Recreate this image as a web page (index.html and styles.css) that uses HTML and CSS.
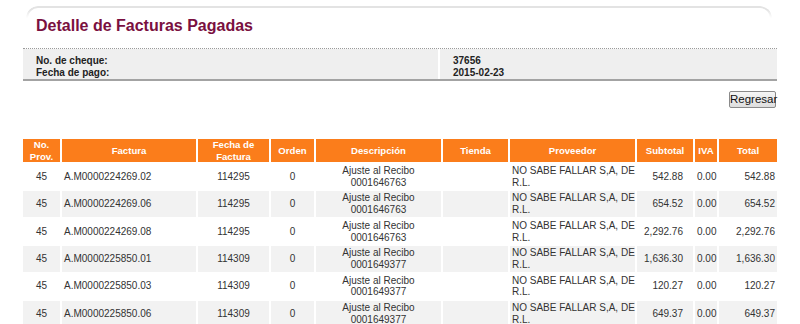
FILE: index.html
```html
<!DOCTYPE html>
<html lang="es">
<head>
<meta charset="utf-8">
<title>Detalle de Facturas Pagadas</title>
<link rel="stylesheet" href="styles.css">
</head>
<body>
<div class="frame"></div>
<h1 class="title">Detalle de Facturas Pagadas</h1>
<div class="info">
  <div class="info-cell labels">No. de cheque:<br>Fecha de pago:</div>
  <div class="info-cell values">37656<br>2015-02-23</div>
</div>
<div class="actions"><button class="btn" type="button">Regresar</button></div>
<table class="grid">
  <thead>
    <tr>
      <th class="c-prov">No.<br>Prov.</th>
      <th class="c-fact">Factura</th>
      <th class="c-fecha">Fecha de<br>Factura</th>
      <th class="c-orden">Orden</th>
      <th class="c-desc">Descripción</th>
      <th class="c-tienda">Tienda</th>
      <th class="c-proveedor">Proveedor</th>
      <th class="c-sub">Subtotal</th>
      <th class="c-iva">IVA</th>
      <th class="c-total">Total</th>
    </tr>
  </thead>
  <tbody>
    <tr>
      <td class="center">45</td><td class="left">A.M0000224269.02</td><td class="center">114295</td><td class="center">0</td>
      <td class="center">Ajuste al Recibo<br>0001646763</td><td></td><td class="left">NO SABE FALLAR S,A, DE<br>R.L.</td>
      <td class="sub">542.88</td><td class="left">0.00</td><td class="right">542.88</td>
    </tr>
    <tr>
      <td class="center">45</td><td class="left">A.M0000224269.06</td><td class="center">114295</td><td class="center">0</td>
      <td class="center">Ajuste al Recibo<br>0001646763</td><td></td><td class="left">NO SABE FALLAR S,A, DE<br>R.L.</td>
      <td class="sub">654.52</td><td class="left">0.00</td><td class="right">654.52</td>
    </tr>
    <tr>
      <td class="center">45</td><td class="left">A.M0000224269.08</td><td class="center">114295</td><td class="center">0</td>
      <td class="center">Ajuste al Recibo<br>0001646763</td><td></td><td class="left">NO SABE FALLAR S,A, DE<br>R.L.</td>
      <td class="sub">2,292.76</td><td class="left">0.00</td><td class="right">2,292.76</td>
    </tr>
    <tr>
      <td class="center">45</td><td class="left">A.M0000225850.01</td><td class="center">114309</td><td class="center">0</td>
      <td class="center">Ajuste al Recibo<br>0001649377</td><td></td><td class="left">NO SABE FALLAR S,A, DE<br>R.L.</td>
      <td class="sub">1,636.30</td><td class="left">0.00</td><td class="right">1,636.30</td>
    </tr>
    <tr>
      <td class="center">45</td><td class="left">A.M0000225850.03</td><td class="center">114309</td><td class="center">0</td>
      <td class="center">Ajuste al Recibo<br>0001649377</td><td></td><td class="left">NO SABE FALLAR S,A, DE<br>R.L.</td>
      <td class="sub">120.27</td><td class="left">0.00</td><td class="right">120.27</td>
    </tr>
    <tr>
      <td class="center">45</td><td class="left">A.M0000225850.06</td><td class="center">114309</td><td class="center">0</td>
      <td class="center">Ajuste al Recibo<br>0001649377</td><td></td><td class="left">NO SABE FALLAR S,A, DE<br>R.L.</td>
      <td class="sub">649.37</td><td class="left">0.00</td><td class="right">649.37</td>
    </tr>
  </tbody>
</table>
</body>
</html>
```
FILE: styles.css
```css
html, body {
  margin: 0;
  padding: 0;
  background: #ffffff;
  font-family: "Liberation Sans", Arial, sans-serif;
  color: #333333;
}

.frame {
  margin: 6px 28px 0 26px;
  height: 10px;
  border: 2px solid #e3e3e3;
  border-bottom: none;
  border-radius: 14px 14px 0 0;
  -webkit-mask-image: linear-gradient(to bottom, #000 30%, transparent 100%);
  mask-image: linear-gradient(to bottom, #000 30%, transparent 100%);
}

.title {
  margin: -2px 0 0 36px;
  font-size: 16px;
  line-height: 20px;
  font-weight: bold;
  color: #7a1040;
}

.info {
  margin: 12px 23px 0 23px;
  display: grid;
  grid-template-columns: 415px 1fr;
  column-gap: 2px;
  border-top: 1px dotted #9a9a9a;
  border-bottom: 2px solid #a3a3a3;
}

.info-cell {
  background: #efefef;
  padding: 6px 13px 1px 13px;
  font-size: 10px;
  line-height: 11.5px;
  font-weight: bold;
  color: #222222;
}

.actions {
  display: flex;
  justify-content: flex-end;
  margin: 10px 24px 0 0;
}

.btn {
  font-family: "Liberation Sans", Arial, sans-serif;
  font-size: 11.5px;
  line-height: 13px;
  color: #111111;
  height: 17px;
  width: 47px;
  padding: 0;
  border: 1px solid #8a8a8a;
  border-radius: 2px;
  background: linear-gradient(#f6f6f6, #dedede);
}

.grid {
  margin: 29px 0 0 21px;
  width: 758px;
  table-layout: fixed;
  border-collapse: separate;
  border-spacing: 2px;
  font-size: 10px;
}

.grid th {
  background: #fb7d1b;
  color: #ffffff;
  font-weight: bold;
  font-size: 9.6px;
  line-height: 11.5px;
  height: 23px;
  padding: 0;
  text-align: center;
  vertical-align: middle;
  box-sizing: border-box;
}

.c-prov { width: 37px; }
.c-fact { width: 134px; }
.c-fecha { width: 71px; }
.c-orden { width: 43px; }
.c-desc { width: 125px; }
.c-tienda { width: 65px; }
.c-proveedor { width: 125px; }
.c-sub { width: 56px; }
.c-iva { width: 22px; }
.c-total { width: 58px; }

.grid td {
  padding: 1px 2px;
  line-height: 11.7px;
  vertical-align: middle;
  white-space: nowrap;
  color: #333333;
}

.grid tbody tr:nth-child(even) td {
  background: #f2f2f2;
}

.center { text-align: center; }
.left { text-align: left; }
.right { text-align: right; }
.grid td.sub { text-align: right; padding-right: 10px; }
.grid td.left { padding-left: 2px; padding-right: 0; }
```
